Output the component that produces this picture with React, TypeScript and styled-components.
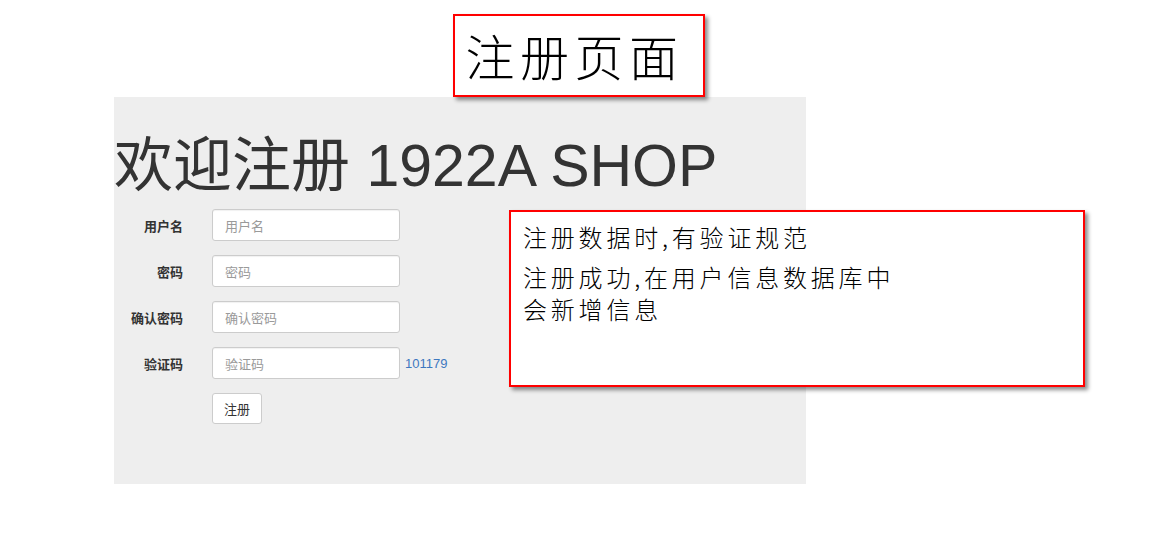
import React from "react";
import styled, { createGlobalStyle } from "styled-components";

const GlobalStyle = createGlobalStyle`
  html, body { margin: 0; padding: 0; background: #ffffff; }
  body { font-family: "Liberation Sans", "Noto Sans CJK SC", sans-serif; }
  * { box-sizing: border-box; }
`;

const Slide = styled.div`
  position: relative;
  width: 1157px;
  height: 548px;
  overflow: hidden;
  background: #ffffff;
  display: flex;
  flex-direction: column;
  padding-top: 14px;
`;

const TitleRow = styled.div`
  display: flex;
  justify-content: center;
`;

const TitleBox = styled.div`
  width: 252px;
  height: 83px;
  border: 2px solid #ff0000;
  background: #ffffff;
  box-shadow: 3px 3px 4px rgba(0, 0, 0, 0.45);
  display: flex;
  align-items: center;
  padding-left: 11px;
  padding-bottom: 3px;
  font-family: "Noto Sans CJK SC", serif;
  font-weight: 300;
  font-size: 49px;
  letter-spacing: 5.5px;
  color: #000000;
  position: relative;
  z-index: 2;
`;

const Panel = styled.div`
  margin-left: 114px;
  width: 692px;
  height: 387px;
  background: #eeeeee;
  padding-top: 37px;
`;

const Heading = styled.h1`
  margin: 0 0 11px 0;
  font-family: "Liberation Sans", "Noto Sans CJK SC", sans-serif;
  font-weight: 400;
  font-size: 59px;
  line-height: 64px;
  height: 64px;
  color: #333333;
  white-space: nowrap;
`;

const Form = styled.div`
  display: flex;
  flex-direction: column;
  gap: 14px;
`;

const Row = styled.div`
  display: flex;
  align-items: center;
  height: 32px;
`;

const Label = styled.label`
  width: 69px;
  margin-right: 29px;
  text-align: right;
  font-weight: 700;
  font-size: 13px;
  color: #333333;
  font-family: "Noto Sans CJK SC", sans-serif;
`;

const Input = styled.input`
  width: 188px;
  height: 32px;
  border: 1px solid #cccccc;
  border-radius: 3px;
  background: #ffffff;
  padding: 0 12px;
  font-size: 13px;
  font-family: "Noto Sans CJK SC", sans-serif;
  color: #555555;
  outline: none;
  box-shadow: inset 0 1px 1px rgba(0, 0, 0, 0.06);
  &::placeholder { color: #9a9a9a; }
`;

const Code = styled.span`
  margin-left: 5px;
  font-size: 13px;
  color: #3d78c0;
  font-family: "Liberation Sans", sans-serif;
`;

const ButtonRow = styled.div`
  display: flex;
  padding-left: 98px;
`;

const Button = styled.button`
  width: 50px;
  height: 31px;
  border: 1px solid #cccccc;
  border-radius: 3px;
  background: #ffffff;
  font-size: 13px;
  color: #333333;
  font-family: "Noto Sans CJK SC", sans-serif;
  padding: 0;
  cursor: pointer;
`;

const Note = styled.div`
  position: absolute;
  left: 509px;
  top: 210px;
  width: 576px;
  height: 177px;
  border: 2px solid #ff0000;
  background: #ffffff;
  box-shadow: 3px 3px 4px rgba(0, 0, 0, 0.45);
  padding: 9px 0 0 12px;
  font-family: "Noto Sans CJK SC", serif;
  font-weight: 300;
  font-size: 24px;
  letter-spacing: 3.8px;
  line-height: 32px;
  color: #000000;
`;

const NoteLine = styled.p<{ $gap?: number }>`
  margin: 0 0 ${(p) => p.$gap ?? 0}px 0;
`;

const fields = [
  { label: "用户名", ph: "用户名", type: "text" },
  { label: "密码", ph: "密码", type: "password" },
  { label: "确认密码", ph: "确认密码", type: "password" },
  { label: "验证码", ph: "验证码", type: "text", code: "101179" },
];

export default function App() {
  return (
    <>
      <GlobalStyle />
      <Slide>
        <TitleRow>
          <TitleBox>注册页面</TitleBox>
        </TitleRow>
        <Panel>
          <Heading>欢迎注册 1922A SHOP</Heading>
          <Form>
            {fields.map((f) => (
              <Row key={f.label}>
                <Label>{f.label}</Label>
                <Input type={f.type} placeholder={f.ph} />
                {f.code && <Code>{f.code}</Code>}
              </Row>
            ))}
            <ButtonRow>
              <Button>注册</Button>
            </ButtonRow>
          </Form>
        </Panel>
        <Note>
          <NoteLine $gap={8}>注册数据时,有验证规范</NoteLine>
          <NoteLine>
            注册成功,在用户信息数据库中
            <br />
            会新增信息
          </NoteLine>
        </Note>
      </Slide>
    </>
  );
}
